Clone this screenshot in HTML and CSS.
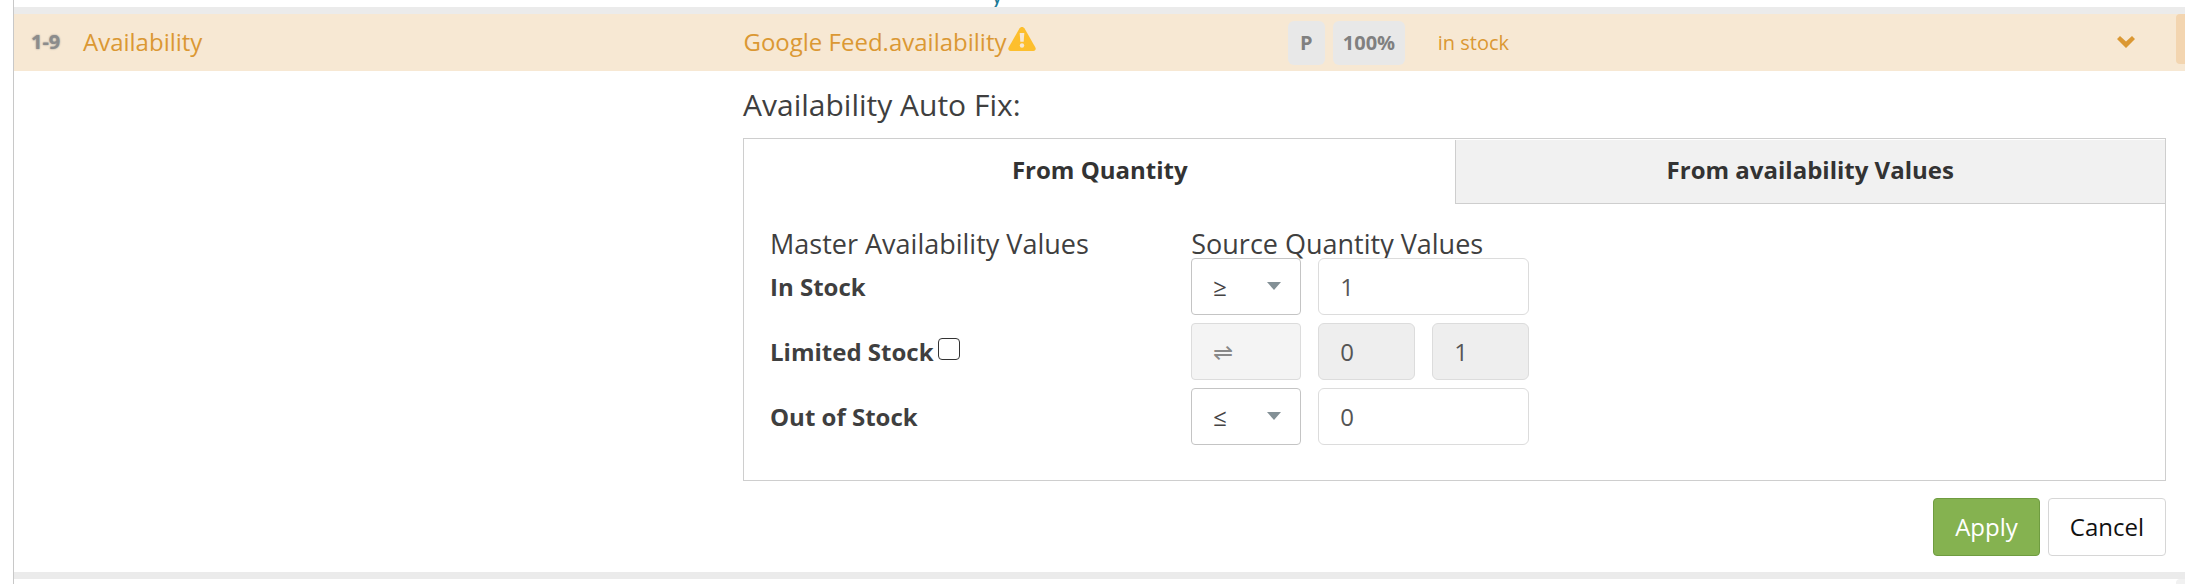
FILE: index.html
```html
<!DOCTYPE html>
<html lang="en">
<head>
    <meta charset="UTF-8">
    <meta name="viewport" content="width=device-width, initial-scale=1.0">
    <title>Availability Auto Fix</title>
    <link rel="stylesheet" href="styles.css">
</head>
<body>

<div class="mapping">
    <div class="row row-prev">
        <a class="prev-link" href="#">y</a>
    </div>

    <div class="row row-active">
        <div class="master">
            <span class="range">1-9</span>
            <span>Availability</span>
        </div>
        <div class="source">
            <div class="source-name">
                <span>Google Feed.availability</span>
                <svg class="warning" viewBox="0 0 28 24" aria-hidden="true">
                    <path d="M14 0c1.200 0 2 .6 2.600 1.600l10.800 19c.9 1.700-.1 3.400-2 3.400H2.600c-1.900 0-2.900-1.700-2-3.400l10.800-19C12 .6 12.800 0 14 0z" fill="#fdbf2d"/>
                    <path d="M11.700 6h4.600l-.6 8.800h-3.400z" fill="#f7e8d3"/>
                    <circle cx="14" cy="18.500" r="2.200" fill="#f7e8d3"/>
                </svg>
            </div>
            <div class="badges">
                <span class="badge">P</span>
                <span class="badge">100%</span>
            </div>
            <span class="sample">in stock</span>
            <button class="toggle" type="button" aria-label="Toggle">
                <svg viewBox="0 0 18 12" width="18" height="12" aria-hidden="true">
                    <path d="M0 3L3 0l6 5.500L15 0l3 3-9 9z" fill="#db9833"/>
                </svg>
            </button>
        </div>
        <button class="row-action" type="button" aria-label="More"></button>
    </div>

    <div class="fix">
        <h2 class="fix-title">Availability Auto Fix:</h2>

        <div class="panel">
            <div class="tabs" role="tablist">
                <button class="tab tab-active" type="button" role="tab" aria-selected="true">From Quantity</button>
                <button class="tab" type="button" role="tab" aria-selected="false">From availability Values</button>
            </div>

            <div class="panel-body">
                <div class="line">
                    <h3 class="heading">Master Availability Values</h3>
                    <h3 class="heading">Source Quantity Values</h3>
                </div>
                <div class="line">
                    <label class="label" for="inStock">In Stock</label>
                    <div class="fields">
                        <div class="select">
                            <select aria-label="In stock operator">
                                <option>≥</option>
                                <option>&gt;</option>
                            </select>
                        </div>
                        <input class="input" type="text" id="inStock" value="1">
                    </div>
                </div>
                <div class="line">
                    <div class="label">
                        <label for="limited">Limited Stock</label>
                        <input class="check" type="checkbox" id="limited">
                    </div>
                    <div class="fields">
                        <div class="select select-disabled">
                            <select aria-label="Limited stock operator" disabled>
                                <option>⇌</option>
                            </select>
                        </div>
                        <input class="input input-half" type="text" value="0" aria-label="Limited stock from" disabled>
                        <input class="input input-half" type="text" value="1" aria-label="Limited stock to" disabled>
                    </div>
                </div>
                <div class="line">
                    <label class="label" for="outOfStock">Out of Stock</label>
                    <div class="fields">
                        <div class="select">
                            <select aria-label="Out of stock operator">
                                <option>≤</option>
                                <option>&lt;</option>
                            </select>
                        </div>
                        <input class="input" type="text" id="outOfStock" value="0">
                    </div>
                </div>
            </div>
        </div>

        <div class="actions">
            <button class="button button-apply" type="button">Apply</button>
            <button class="button" type="button">Cancel</button>
        </div>
    </div>

    <div class="row row-next">
        <button class="row-action row-action-muted" type="button" aria-label="More"></button>
    </div>
</div>

</body>
</html>
```
FILE: styles.css
```css
* {
    box-sizing: border-box;
}

body {
    margin: 0;
    background-color: #fff;
    color: #3f3f3f;
    font-family: "Open Sans", sans-serif;
    font-size: 24px;
}

button,
input,
select {
    font-family: inherit;
    font-size: inherit;
}

.mapping {
    display: flex;
    flex-direction: column;
    min-height: 100vh;
    margin-left: 13px;
    border-left: 1px solid #c8c8c8;
}

/* rows */
.row {
    display: flex;
    align-items: center;
    border-top: 7px solid #ebebeb;
}

.row-prev {
    height: 7px;
    padding-left: 45%;
    border-top: 0;
    align-items: flex-end;
    overflow: hidden;
}

.prev-link {
    color: #1b7a96;
    line-height: 26px;
    text-decoration: none;
}

.row-active {
    height: 64px;
    background-color: #f7e8d3;
    color: #db9833;
}

.row-next {
    flex: 1;
    justify-content: flex-end;
}

.master {
    display: flex;
    align-items: center;
    width: 33.6%;
    padding-left: 17px;
    padding-bottom: 2px;
}

.range {
    width: 52px;
    color: #8c8c8c;
    font-size: 20px;
    font-weight: 700;
    text-shadow: 0 0 2px #8c8c8c;
}

.source {
    flex: 1;
    display: flex;
    align-items: center;
}

.source-name {
    display: flex;
    align-items: center;
    width: 38%;
    padding-bottom: 2px;
}

.warning {
    width: 28px;
    height: 24px;
    margin-left: 2px;
    margin-bottom: 6px;
}

.badges {
    display: flex;
    gap: 8px;
    width: 150px;
}

.badge {
    min-width: 37px;
    padding: 0 10px;
    border-radius: 6px;
    background-color: #e8e8e8;
    color: #808080;
    font-size: 20px;
    font-weight: 700;
    line-height: 44px;
    text-align: center;
}

.sample {
    font-size: 20px;
}

.toggle {
    display: flex;
    margin-left: auto;
    margin-right: 41px;
    padding: 0 0 2px;
    border: 0;
    background: none;
    cursor: pointer;
}

.row-action {
    align-self: flex-start;
    width: 9px;
    height: 50px;
    padding: 0;
    border: 0;
    border-radius: 4px 0 0 4px;
    background-color: #f3d5b0;
}

.row-action-muted {
    align-self: stretch;
    height: auto;
    border-radius: 4px 0 0 0;
    background-color: #f1f1f1;
}

/* auto fix */
.fix {
    margin-left: 33.58%;
    padding-right: 19px;
    padding-bottom: 16px;
}

.fix-title {
    margin: 0;
    font-size: 30px;
    font-weight: 400;
    line-height: 67px;
}

.panel {
    border: 1px solid #cecece;
}

.tabs {
    display: flex;
    padding-top: 1px;
}

.tab {
    flex: 1;
    height: 64px;
    padding: 0 0 4px;
    border: 0;
    border-left: 1px solid #cecece;
    border-bottom: 1px solid #cecece;
    background-color: #f1f1f1;
    color: #333;
    font-weight: 700;
    cursor: pointer;
}

.tab-active {
    border-color: transparent;
    background-color: #fff;
}

.panel-body {
    display: flex;
    flex-direction: column;
    gap: 8px;
    padding: 26px 26px 35px;
}

.line {
    display: grid;
    grid-template-columns: 4fr 9fr;
    align-items: center;
}

.heading {
    margin: 0 0 -8px;
    font-size: 27px;
    font-weight: 400;
    line-height: 28px;
}

.label {
    display: flex;
    align-items: center;
    gap: 4px;
    font-weight: 700;
}

.check {
    appearance: none;
    width: 22px;
    height: 22px;
    margin: 0 0 6px;
    border: 1px solid #333;
    border-radius: 4px;
    background-color: #fff;
}

.check:checked {
    background-color: #333;
}

.fields {
    display: flex;
    gap: 17px;
    position: relative;
}

.select {
    position: relative;
    width: 110px;
}

.select::after {
    content: "";
    position: absolute;
    top: 24px;
    right: 20px;
    border: 7px solid transparent;
    border-top: 8px solid #839096;
    border-bottom: 0;
    pointer-events: none;
}

.select select {
    appearance: none;
    width: 100%;
    height: 57px;
    padding: 0 21px;
    border: 1px solid #c4c4c4;
    border-radius: 4px;
    background-color: #fff;
    color: #444;
}

.select-disabled::after {
    display: none;
}

.select-disabled select {
    border-color: #dcdcdc;
    background-color: #f4f4f4;
    color: #888;
    opacity: 1;
}

.input {
    width: 211px;
    height: 57px;
    padding: 0 21px;
    border: 1px solid #dcdcdc;
    border-radius: 6px;
    background-color: #fff;
    color: #555;
}

.input:disabled {
    background-color: #eee;
}

.input-half {
    width: 97px;
}

.actions {
    display: flex;
    justify-content: flex-end;
    gap: 8px;
    padding-top: 17px;
}

.button {
    height: 58px;
    padding: 0 21px 2px;
    border: 1px solid #d6d6d6;
    border-radius: 4px;
    background-color: #fff;
    color: #111;
    cursor: pointer;
}

.button-apply {
    border-color: #6f9c40;
    background-color: #85b250;
    color: #fff;
}
```
